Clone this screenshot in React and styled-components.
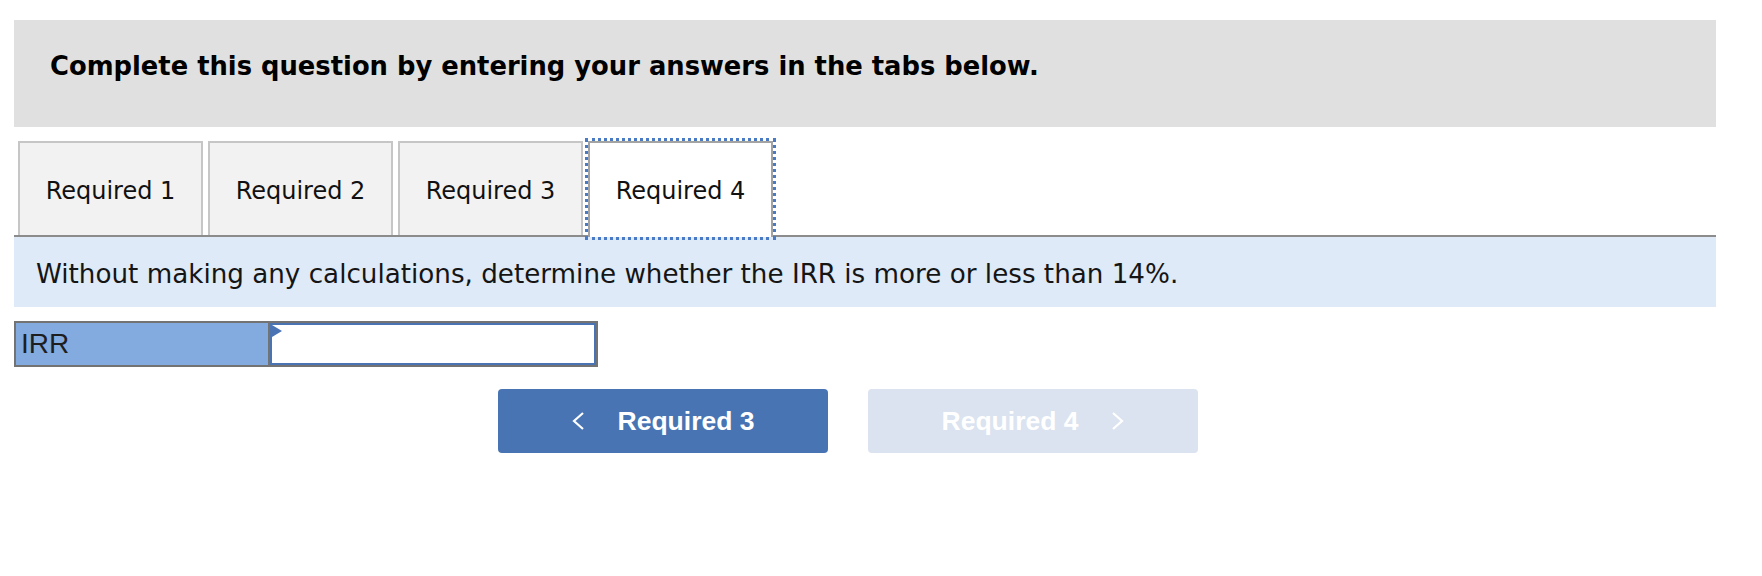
import React from 'react';
import styled, { createGlobalStyle } from 'styled-components';

const GlobalStyle = createGlobalStyle`
  body {
    margin: 0;
    background: #ffffff;
    font-family: "DejaVu Sans", Verdana, sans-serif;
  }
`;

const Page = styled.div`
  padding: 20px 46px 0 14px;
`;

const Header = styled.div`
  height: 107px;
  box-sizing: border-box;
  background: #e0e0e0;
  padding: 31px 0 0 36px;
  font-size: 25.8px;
  line-height: 30px;
  font-weight: 700;
  color: #000;
`;

const TabBar = styled.div`
  margin-top: 14px;
  display: flex;
  align-items: flex-start;
  gap: 5px;
  padding-left: 4px;
  border-bottom: 2px solid #8c8c8c;
`;

const Tab = styled.div`
  width: 185px;
  height: ${(p) => (p.$active ? '96px' : '94px')};
  margin-bottom: ${(p) => (p.$active ? '-2px' : '0')};
  box-sizing: border-box;
  border: 2px solid ${(p) => (p.$active ? '#a3a3a3' : '#c6c6c6')};
  border-bottom: 0;
  background: ${(p) => (p.$active ? '#ffffff' : '#f2f2f2')};
  outline: ${(p) => (p.$active ? '3px dotted #4a7ac4' : 'none')};
  padding-top: 34px;
  text-align: center;
  font-size: 24px;
  line-height: 28px;
  color: #111;
  position: relative;
`;

const Prompt = styled.div`
  height: 70px;
  box-sizing: border-box;
  background: #deeaf7;
  padding: 22px 0 0 22px;
  font-size: 26.2px;
  line-height: 30px;
  color: #151515;
`;

const AnswerRow = styled.div`
  margin-top: 14px;
  width: 584px;
  height: 46px;
  box-sizing: border-box;
  display: flex;
  border: 2px solid #737373;
`;

const AnswerLabel = styled.div`
  width: 254px;
  box-sizing: border-box;
  background: #84abdf;
  border-right: 2px solid #737373;
  padding-left: 5px;
  font-family: "Liberation Sans", Arial, sans-serif;
  font-size: 28px;
  line-height: 42px;
  color: #1e1e1e;
`;

const AnswerCell = styled.div`
  flex: 1;
  position: relative;
  border: 2px solid #4a73b4;
  background: #fff;
`;

const CornerMark = styled.span`
  position: absolute;
  top: 0;
  left: 0;
  width: 0;
  height: 0;
  border-left: 10px solid #4a73b4;
  border-top: 6px solid transparent;
  border-bottom: 6px solid transparent;
`;

const NavRow = styled.div`
  margin-top: 22px;
  display: flex;
  justify-content: center;
  gap: 40px;
  padding-right: 34px;
`;

const NavButton = styled.button`
  width: 330px;
  height: 64px;
  border: 0;
  border-radius: 4px;
  background: ${(p) => (p.disabled ? '#dae3ef' : '#4874b3')};
  color: #ffffff;
  display: flex;
  align-items: center;
  justify-content: center;
  gap: 34px;
  font-family: "Liberation Sans", Arial, sans-serif;
  font-weight: 700;
  font-size: 26.5px;
  cursor: ${(p) => (p.disabled ? 'default' : 'pointer')};
  padding: 0;
`;

const Chevron = ({ dir }) => (
  <svg width="12" height="18" viewBox="0 0 12 18" fill="none">
    <path
      d={dir === 'left' ? 'M11 1 L2 9 L11 17' : 'M1 1 L10 9 L1 17'}
      stroke="#ffffff"
      strokeWidth="2.2"
    />
  </svg>
);

const tabs = ['Required 1', 'Required 2', 'Required 3', 'Required 4'];

const App = () => {
  return (
    <Page>
      <GlobalStyle />
      <Header>Complete this question by entering your answers in the tabs below.</Header>
      <TabBar>
        {tabs.map((t, i) => (
          <Tab key={t} $active={i === 3}>
            {t}
          </Tab>
        ))}
      </TabBar>
      <Prompt>Without making any calculations, determine whether the IRR is more or less than 14%.</Prompt>
      <AnswerRow>
        <AnswerLabel>IRR</AnswerLabel>
        <AnswerCell>
          <CornerMark />
        </AnswerCell>
      </AnswerRow>
      <NavRow>
        <NavButton>
          <Chevron dir="left" />
          <span>Required 3</span>
        </NavButton>
        <NavButton disabled>
          <span>Required 4</span>
          <Chevron dir="right" />
        </NavButton>
      </NavRow>
    </Page>
  );
};

export default App;
